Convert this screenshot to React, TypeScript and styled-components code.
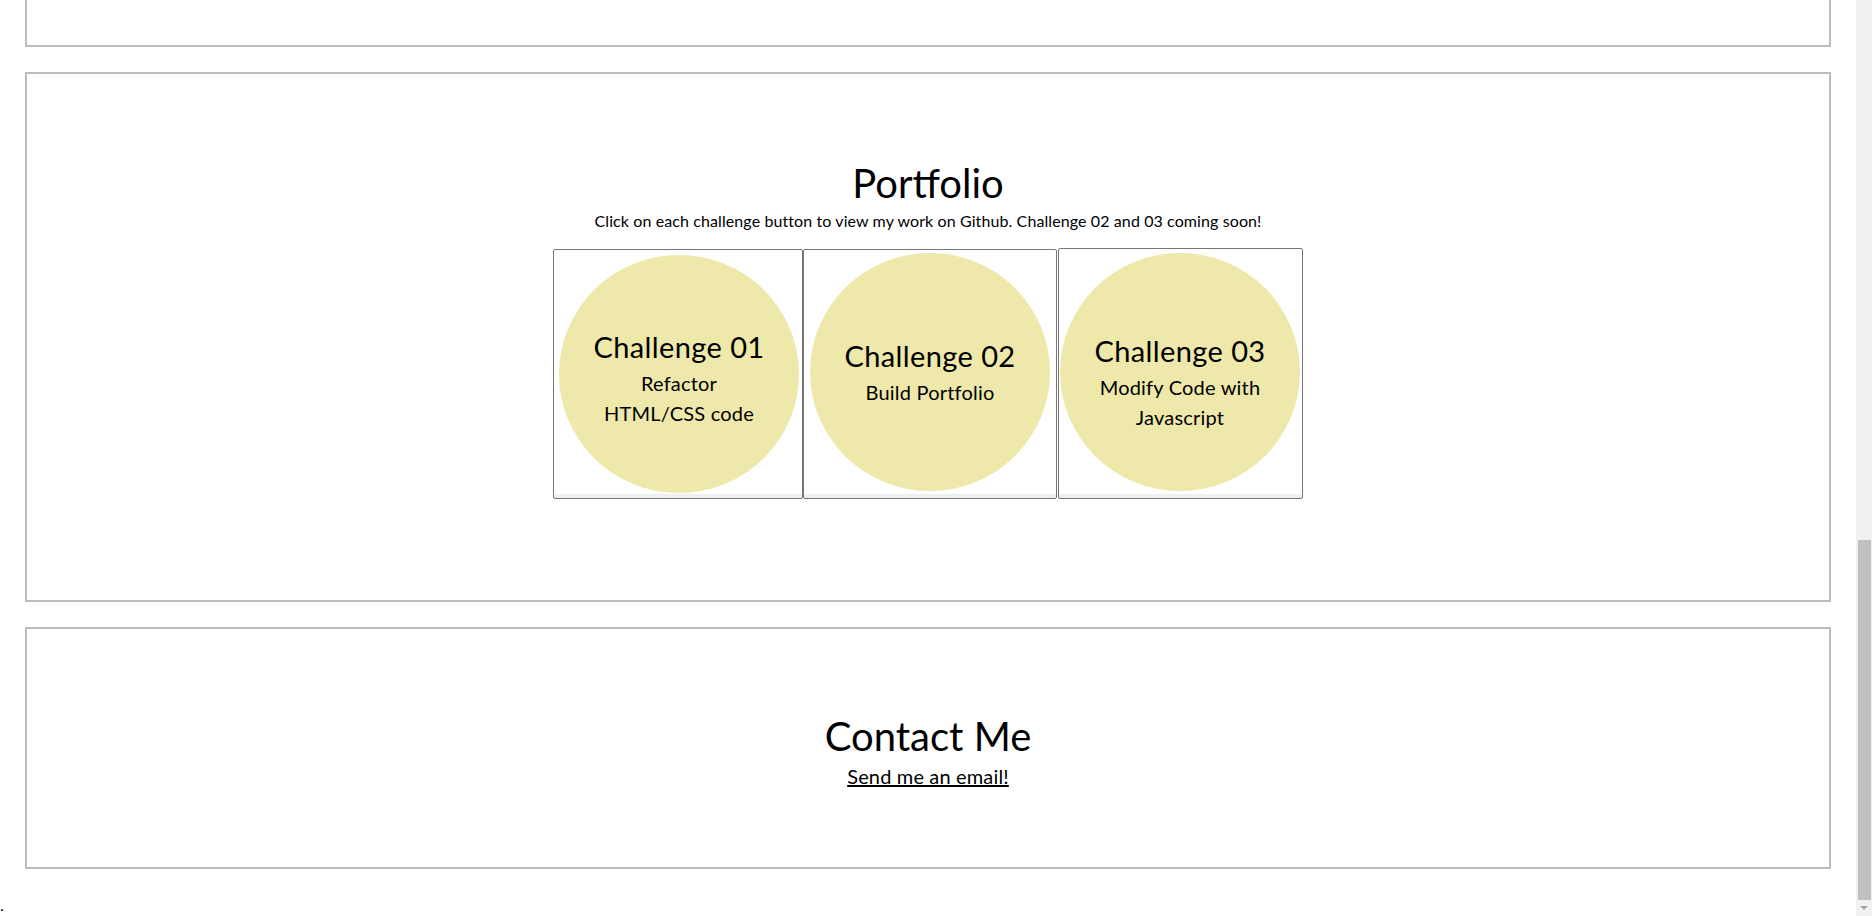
import React, { useLayoutEffect, useRef } from "react";
import styled, { createGlobalStyle } from "styled-components";

const GlobalStyle = createGlobalStyle`
  html, body {
    margin: 0;
    padding: 0;
    height: 100%;
    overflow: hidden;
    background: #ffffff;
  }
  body {
    font-family: "Lato", "Open Sans", sans-serif;
    color: #000000;
  }
  #root {
    height: 100%;
  }
`;

const Page = styled.div`
  display: flex;
  height: 100vh;
`;

const Viewport = styled.div`
  flex: 1;
  min-width: 0;
  overflow-y: scroll;
  scrollbar-width: none;
  &::-webkit-scrollbar {
    display: none;
  }
`;

const ScrollBar = styled.div`
  width: 16px;
  flex: none;
  background: #f1f1f1;
  display: flex;
  flex-direction: column;
`;

const ScrollButton = styled.div`
  height: 16px;
  flex: none;
  display: flex;
  align-items: center;
  justify-content: center;
`;

const Track = styled.div`
  flex: 1;
  display: flex;
  flex-direction: column;
  justify-content: flex-end;
`;

const Thumb = styled.div`
  height: 360px;
  margin: 0 1px 0 2px;
  background: #c1c1c1;
`;

const Section = styled.section<{ $height: number; $shift?: number }>`
  box-sizing: border-box;
  margin: 25px;
  height: ${(p) => p.$height}px;
  border: 2px solid #bfbbbb;
  display: flex;
  flex-direction: column;
  align-items: center;
  justify-content: center;
  padding-top: ${(p) => p.$shift ?? 0}px;
`;

const Heading = styled.h2`
  margin: 0;
  font-size: 40px;
  line-height: 53px;
  font-weight: 400;
`;

const Lead = styled.p`
  margin: 0;
  font-size: 16px;
  line-height: 21px;
  letter-spacing: 0.1px;
`;

const CardRow = styled.div`
  display: flex;
  align-items: flex-end;
  margin: 17px 0 19px;
`;

const Card = styled.button<{ $pt: number; $pl: number; $pr: number; $h: number; $ml: number }>`
  box-sizing: border-box;
  height: ${(p) => p.$h}px;
  margin: 0 0 0 ${(p) => p.$ml}px;
  padding: ${(p) => p.$pt}px ${(p) => p.$pr}px 0 ${(p) => p.$pl}px;
  border: 1px solid #767676;
  border-radius: 2px;
  background: linear-gradient(to top, #efefef 4px, #ffffff 4px);
  display: flex;
  align-items: flex-start;
  font-family: inherit;
  color: inherit;
  cursor: pointer;
`;

const Circle = styled.div<{ $textTop: number }>`
  box-sizing: border-box;
  width: 240px;
  height: 238px;
  border-radius: 50%;
  background: #eee8aa;
  display: flex;
  flex-direction: column;
  align-items: center;
  padding-top: ${(p) => p.$textTop}px;
  text-align: center;
`;

const CardTitle = styled.span`
  display: block;
  font-size: 29px;
  line-height: 37px;
  letter-spacing: 0.4px;
  margin-bottom: 3px;
`;

const CardLine = styled.span`
  display: block;
  font-size: 20px;
  line-height: 30px;
  letter-spacing: 0.2px;
`;

const EmailLink = styled.a`
  font-size: 20px;
  line-height: 27px;
  letter-spacing: 0.15px;
  color: #000000;
  text-decoration: underline;
`;

const Footer = styled.footer`
  height: 22px;
  font-size: 16px;
  line-height: 22px;
`;

type Challenge = {
  title: string;
  lines: string[];
  pt: number;
  pl: number;
  pr: number;
  h: number;
  ml: number;
  textTop: number;
};

const challenges: Challenge[] = [
  { title: "Challenge 01", lines: ["Refactor", "HTML/CSS code"], pt: 5, pl: 5, pr: 3, h: 250, ml: 0, textTop: 73 },
  { title: "Challenge 02", lines: ["Build Portfolio"], pt: 3, pl: 6, pr: 6, h: 250, ml: 0, textTop: 84 },
  { title: "Challenge 03", lines: ["Modify Code with", "Javascript"], pt: 4, pl: 1, pr: 2, h: 251, ml: 1, textTop: 79 },
];

export default function App() {
  const viewRef = useRef<HTMLDivElement>(null);

  useLayoutEffect(() => {
    const el = viewRef.current;
    if (el) el.scrollTop = el.scrollHeight;
  }, []);

  return (
    <>
      <GlobalStyle />
      <Page>
        <Viewport ref={viewRef}>
          <Section $height={1361} />
          <Section $height={530}>
            <Heading>Portfolio</Heading>
            <Lead>Click on each challenge button to view my work on Github. Challenge 02 and 03 coming soon!</Lead>
            <CardRow>
              {challenges.map((c) => (
                <Card key={c.title} $pt={c.pt} $pl={c.pl} $pr={c.pr} $h={c.h} $ml={c.ml}>
                  <Circle $textTop={c.textTop}>
                    <CardTitle>{c.title}</CardTitle>
                    {c.lines.map((l) => (
                      <CardLine key={l}>{l}</CardLine>
                    ))}
                  </Circle>
                </Card>
              ))}
            </CardRow>
          </Section>
          <Section $height={242} $shift={4}>
            <Heading>Contact Me</Heading>
            <EmailLink href="#contact">Send me an email!</EmailLink>
          </Section>
          <Footer>.</Footer>
        </Viewport>
        <ScrollBar>
          <ScrollButton />
          <Track>
            <Thumb />
          </Track>
          <ScrollButton>
            <svg width="8" height="4" viewBox="0 0 8 4">
              <path d="M0 0h8L4 4z" fill="#a3a3a3" />
            </svg>
          </ScrollButton>
        </ScrollBar>
      </Page>
    </>
  );
}
